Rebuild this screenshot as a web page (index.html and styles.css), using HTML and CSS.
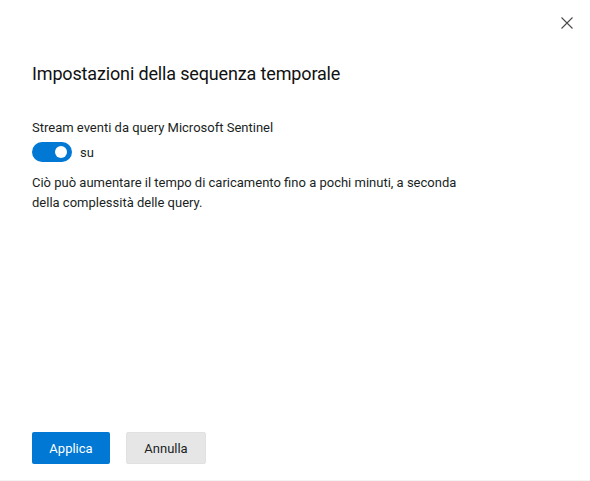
FILE: index.html
```html
<!DOCTYPE html>
<html lang="it">
<head>
<meta charset="utf-8">
<link rel="stylesheet" href="styles.css">
</head>
<body>
<div class="dialog">
  <button class="close" aria-label="Chiudi">
    <svg width="12" height="12" viewBox="0 0 12 12"><path d="M0.5 0.5 L11.5 11.5 M11.5 0.5 L0.5 11.5" stroke="#4a4a4a" stroke-width="1.1" fill="none"/></svg>
  </button>
  <h1 class="title">Impostazioni della sequenza temporale</h1>
  <div class="body">
    <div class="label">Stream eventi da query Microsoft Sentinel</div>
    <div class="toggle-row">
      <span class="toggle"><span class="knob"></span></span>
      <span class="toggle-text">su</span>
    </div>
    <p class="desc">Ciò può aumentare il tempo di caricamento fino a pochi minuti, a seconda della complessità delle query.</p>
  </div>
  <div class="footer">
    <button class="btn primary">Applica</button>
    <button class="btn secondary">Annulla</button>
  </div>
</div>
</body>
</html>
```
FILE: styles.css
```css
html, body {
  margin: 0;
  padding: 0;
  background: #fff;
}
body {
  font-family: Roboto, "Liberation Sans", Arial, sans-serif;
  color: #201f1e;
}
.dialog {
  position: relative;
  box-sizing: border-box;
  height: 481px;
  padding: 0 32px;
  display: flex;
  flex-direction: column;
  border-bottom: 1px solid #f3f3f3;
}
.close {
  position: absolute;
  top: 16px;
  right: 16px;
  width: 14px;
  height: 14px;
  padding: 1px;
  border: 0;
  background: none;
  display: flex;
}
.title {
  margin: 62px 0 0;
  font-size: 18px;
  letter-spacing: -0.15px;
  font-weight: 400;
  line-height: 24px;
  color: #111;
}
.body {
  margin-top: 32px;
  font-size: 13px;
  line-height: 20px;
}
.label {
  line-height: 20px;
}
.toggle-row {
  display: flex;
  align-items: center;
  gap: 8px;
  margin-top: 2px;
}
.toggle {
  width: 40px;
  height: 20px;
  border-radius: 10px;
  background: #0078d4;
  position: relative;
  display: block;
}
.knob {
  position: absolute;
  right: 5px;
  top: 4px;
  width: 12px;
  height: 12px;
  border-radius: 50%;
  background: #fff;
}
.toggle-text {
  margin-top: 3px;
}
.desc {
  margin: 10px 0 0;
  width: 440px;
}
.footer {
  margin-top: auto;
  margin-bottom: 16px;
  display: flex;
  gap: 16px;
}
.btn {
  height: 32px;
  border-radius: 2px;
  font-family: inherit;
  font-size: 13px;
  padding: 0;
  border: 1px solid transparent;
}
.primary {
  width: 78px;
  background: #0078d4;
  color: #fff;
}
.secondary {
  width: 80px;
  background: #e6e6e6;
  border-color: #e1e1e1;
  color: #201f1e;
}
```
